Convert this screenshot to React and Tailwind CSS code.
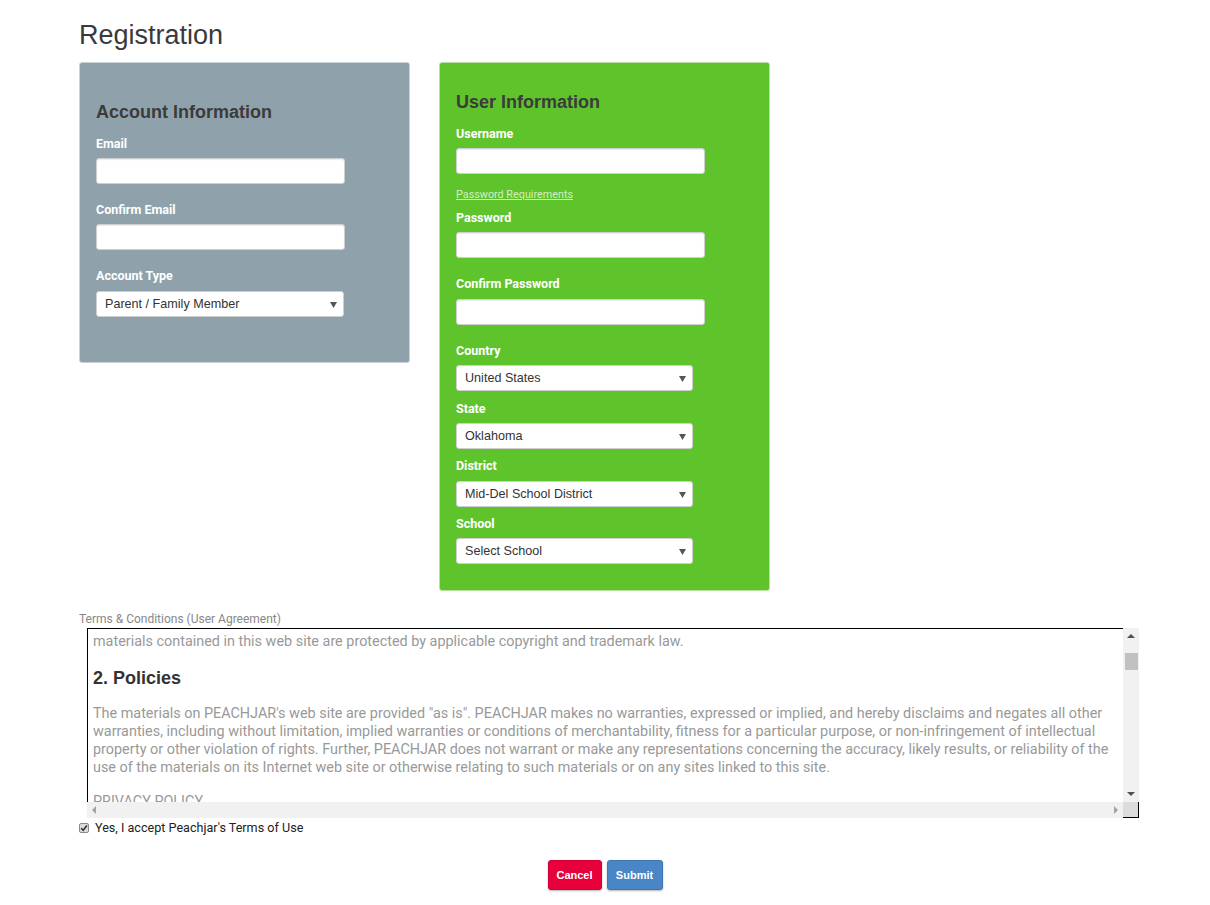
import React, { useEffect, useRef } from 'react';

const Label = ({ children, className = '' }) => (
  <div className={`text-[12.5px] font-bold leading-4 text-white ${className}`}>{children}</div>
);

const TextInput = ({ className = '', type = 'text' }) => (
  <input
    type={type}
    className={`block h-[26px] w-[249px] rounded-[3px] border border-[#cfcfcf] bg-white px-2 text-[13px] shadow-[inset_0_1px_1px_rgba(0,0,0,0.08)] outline-none ${className}`}
  />
);

const Select = ({ value, options, width = 'w-[248px]', className = '' }) => (
  <div className={`relative h-[26px] ${width} ${className}`}>
    <select
      defaultValue={value}
      className="block h-full w-full appearance-none rounded-[3px] border border-[#cfcfcf] bg-white pl-[8px] pr-6 font-['Liberation_Sans',Arial,sans-serif] text-[12.6px] text-[#333] outline-none"
    >
      {options.map((o) => (
        <option key={o}>{o}</option>
      ))}
    </select>
    <svg className="pointer-events-none absolute right-[7px] top-[11px]" width="7" height="6" viewBox="0 0 7 6">
      <path d="M0 0 L7 0 L3.5 6 Z" fill="#555" />
    </svg>
  </div>
);

const Heading = React.forwardRef(({ children }, ref) => (
  <h3 ref={ref} className="my-4 font-['Liberation_Sans',Arial,sans-serif] text-[18px] font-bold leading-[22px] text-[#333]">
    {children}
  </h3>
));

const Arrow = ({ dir, color = '#505050' }) => {
  const d = {
    up: 'M0 4 L4 0 L8 4 Z',
    down: 'M0 0 L8 0 L4 4 Z',
    left: 'M4 0 L4 8 L0 4 Z',
    right: 'M0 0 L4 4 L0 8 Z',
  }[dir];
  const vertical = dir === 'up' || dir === 'down';
  return (
    <svg width={vertical ? 8 : 4} height={vertical ? 4 : 8} viewBox={vertical ? '0 0 8 4' : '0 0 4 8'}>
      <path d={d} fill={color} />
    </svg>
  );
};

const App = () => {
  const boxRef = useRef(null);
  const policiesRef = useRef(null);

  useEffect(() => {
    if (boxRef.current && policiesRef.current) {
      boxRef.current.scrollTop = policiesRef.current.offsetTop - 38;
    }
  }, []);

  return (
    <div className="min-h-screen bg-white font-['Roboto','Liberation_Sans',Arial,sans-serif] text-[#333]">
      <div className="pl-[79px] pt-[18px]">
        <h1 className="font-['Liberation_Sans',Arial,sans-serif] text-[27px] leading-[34px] text-[#3a3a3a]">Registration</h1>

        <div className="mt-[10px] flex items-start gap-[29px]">
          {/* account panel */}
          <div className="w-[331px] rounded-[3px] border border-[#c9d2d6] bg-[#8fa2ab] px-[16px] pb-[45px] pt-[39px]">
            <h2 className="font-['Liberation_Sans',Arial,sans-serif] text-[18px] font-bold leading-5 text-[#3b3b3b]">Account Information</h2>
            <Label className="mt-[14px]">Email</Label>
            <TextInput className="mt-[6px]" />
            <Label className="mt-[18px]">Confirm Email</Label>
            <TextInput className="mt-[6px]" />
            <Label className="mt-[18px]">Account Type</Label>
            <Select className="mt-[7px]" value="Parent / Family Member" options={['Parent / Family Member', 'Student', 'Staff']} />
          </div>

          {/* user panel */}
          <div className="w-[331px] rounded-[3px] border border-[#b9e0a2] bg-[#5fc32c] px-[16px] pb-[26px] pt-[29px]">
            <h2 className="font-['Liberation_Sans',Arial,sans-serif] text-[18px] font-bold leading-5 text-[#3b3b3b]">User Information</h2>
            <Label className="mt-[14px]">Username</Label>
            <TextInput className="mt-[6px]" />
            <a href="#" className="mt-[14px] block w-fit text-[10.8px] leading-[14px] text-[#d3efc2] underline">
              Password Requirements
            </a>
            <Label className="mt-[8px]">Password</Label>
            <TextInput type="password" className="mt-[6px]" />
            <Label className="mt-[18px]">Confirm Password</Label>
            <TextInput type="password" className="mt-[7px]" />
            <Label className="mt-[18px]">Country</Label>
            <Select className="mt-[6px]" width="w-[237px]" value="United States" options={['United States', 'Canada']} />
            <Label className="mt-[10px]">State</Label>
            <Select className="mt-[6px]" width="w-[237px]" value="Oklahoma" options={['Oklahoma', 'Texas']} />
            <Label className="mt-[9px]">District</Label>
            <Select className="mt-[7px]" width="w-[237px]" value="Mid-Del School District" options={['Mid-Del School District']} />
            <Label className="mt-[9px]">School</Label>
            <Select className="mt-[6px]" width="w-[237px]" value="Select School" options={['Select School']} />
          </div>
        </div>

        <div className="mt-[21px] text-[12px] leading-[14px] text-[#888]">Terms &amp; Conditions (User Agreement)</div>

        {/* terms box with classic scrollbars */}
        <div className="ml-2 mt-[2px] grid h-[190px] w-[1052px] grid-cols-[1fr_16px] grid-rows-[1fr_16px]">
          <div
            ref={boxRef}
            className="relative overflow-hidden border-l border-t border-black pl-[5px] pr-[6px] text-[14.4px] leading-[18px] text-[#999]"
          >
            <Heading>1. Terms</Heading>
            <p>
              By accessing this web site, you are agreeing to be bound by these web site Terms and Conditions of Use, all applicable laws and
              regulations, and agree that you are responsible for compliance with any applicable local laws. If you do not agree with any of
              these terms, you are prohibited from using or accessing this site. The
              <br />
              materials contained in this web site are protected by applicable copyright and trademark law.
            </p>
            <Heading ref={policiesRef}>2. Policies</Heading>
            <p>
              The materials on PEACHJAR's web site are provided "as is". PEACHJAR makes no warranties, expressed or implied, and hereby
              disclaims and negates all other warranties, including without limitation, implied warranties or conditions of merchantability,
              fitness for a particular purpose, or non-infringement of intellectual property or other violation of rights. Further, PEACHJAR
              does not warrant or make any representations concerning the accuracy, likely results, or reliability of the use of the
              materials on its Internet web site or otherwise relating to such materials or on any sites linked to this site.
            </p>
            <p className="mt-4">PRIVACY POLICY</p>
            <p className="mt-4">
              Your privacy is very important to us. Accordingly, we have developed this Policy in order for you to understand how we collect,
              use, communicate and disclose and make use of personal information. The following outlines our privacy policy.
            </p>
            <p className="mt-4">
              Before or at the time of collecting personal information, we will identify the purposes for which information is being collected.
            </p>
            <p className="mt-4">
              We will collect and use of personal information solely with the objective of fulfilling those purposes specified by us and for
              other compatible purposes, unless we obtain the consent of the individual concerned or as required by law.
            </p>
            <p className="mt-4">We will only retain personal information as long as necessary for the fulfillment of those purposes.</p>
            <p className="mt-4">
              We will protect personal information by reasonable security safeguards against loss or theft, as well as unauthorized access,
              disclosure, copying, use or modification.
            </p>
            <Heading>3. Limitations</Heading>
            <p>
              In no event shall PEACHJAR or its suppliers be liable for any damages (including, without limitation, damages for loss of data or
              profit, or due to business interruption,) arising out of the use or inability to use the materials on PEACHJAR's Internet site.
            </p>
          </div>

          {/* vertical scrollbar */}
          <div className="flex flex-col bg-[#f1f1f1]">
            <div className="flex h-[16px] items-center justify-center">
              <Arrow dir="up" />
            </div>
            <div className="ml-[2px] mt-[9px] h-[17px] w-[13px] bg-[#c1c1c1]" />
            <div className="flex-1" />
            <div className="flex h-[16px] items-center justify-center">
              <Arrow dir="down" />
            </div>
          </div>

          {/* horizontal scrollbar */}
          <div className="flex items-center justify-between bg-[#f1f1f1] px-[5px]">
            <Arrow dir="left" color="#a3a3a3" />
            <Arrow dir="right" color="#a3a3a3" />
          </div>
          <div className="border-b border-r border-black bg-[#dcdcdc]" />
        </div>

        <label className="mt-[3px] flex items-center gap-[5px] text-[12.6px] leading-[14px] text-[#222]">
          <span className="flex h-[10px] w-[10px] items-center justify-center rounded-[2px] border border-[#8a8a8a] bg-[#dcdcdc]">
            <svg width="8" height="8" viewBox="0 0 8 8">
              <path d="M1.2 4.2 L3.2 6.2 L6.9 1.6" fill="none" stroke="#333" strokeWidth="1.6" />
            </svg>
          </span>
          <span className="ml-[1px]">Yes, I accept Peachjar's Terms of Use</span>
        </label>
      </div>

      <div className="mt-[25px] flex justify-center gap-[5px] pb-4">
        <button className="h-[30px] w-[54px] rounded-[3px] border border-[#d30036] bg-[#e8003d] font-['Liberation_Sans',Arial,sans-serif] text-[11px] font-bold text-white shadow-[0_1px_2px_rgba(0,0,0,0.3)]">
          Cancel
        </button>
        <button className="h-[30px] w-[56px] rounded-[3px] border border-[#3d76b3] bg-[#4a86c6] font-['Liberation_Sans',Arial,sans-serif] text-[11px] font-bold text-white shadow-[0_1px_2px_rgba(0,0,0,0.3)]">
          Submit
        </button>
      </div>
    </div>
  );
};

export default App;
